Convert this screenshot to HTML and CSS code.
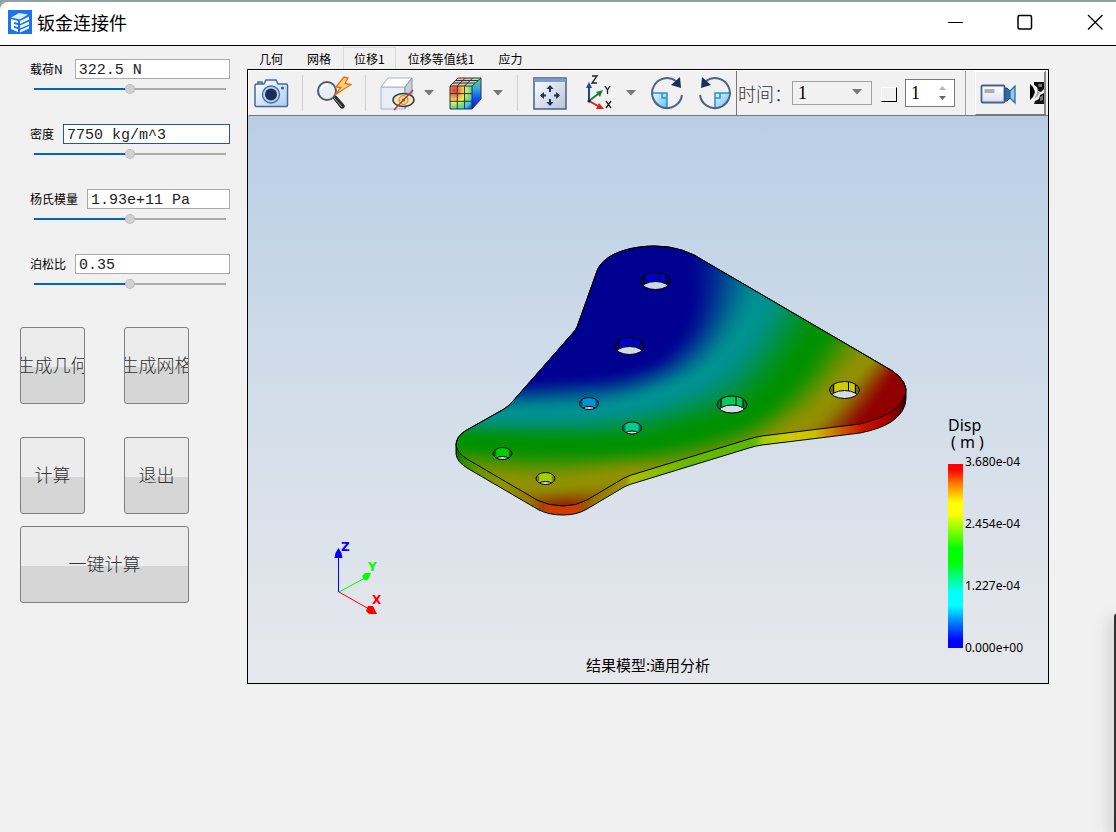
FILE: index.html
```html
<!DOCTYPE html>
<html lang="zh-CN">
<head>
<meta charset="utf-8">
<title>钣金连接件</title>
<link rel="stylesheet" href="styles.css">
</head>
<body>
<div class="window">
  <header class="titlebar">
    <svg class="logo" viewBox="0 0 24 24" aria-hidden="true">
      <rect width="24" height="24" fill="#1b74e8"/>
      <path d="M3 7.500 11 3l9 1.500-8 5z" fill="#dfeafa"/>
      <path d="M3 9l7 2v2l-4-1v2l4 1v2l-4-1v2l4 1v3l-7-3z" fill="#fff"/>
      <path d="M12 11l9-4.500v3L12 14zM12 15.500l9-4v3l-9 4zM12 20l9-4v2.500L12 22.500z" fill="#f1f6fd"/>
    </svg>
    <h1 class="title">钣金连接件</h1>
    <div class="winctl">
      <button class="wbtn" type="button" aria-label="最小化"><svg viewBox="0 0 16 16"><path d="M1 8.500H16" stroke="#000"/></svg></button>
      <button class="wbtn" type="button" aria-label="最大化"><svg viewBox="0 0 16 16"><rect x="1" y="1.500" width="13.500" height="13.500" rx="1.500" fill="none" stroke="#000" stroke-width="1.500"/></svg></button>
      <button class="wbtn" type="button" aria-label="关闭"><svg viewBox="0 0 16 16"><path d="M1 1 15.500 15.500M15.500 1 1 15.500" stroke="#000" stroke-width="1.300"/></svg></button>
    </div>
  </header>

  <main class="main">
    <aside class="side">
      <div class="param">
        <div class="prow prow-unit"><label for="load">载荷N</label><input id="load" class="ptext" type="text" value="322.5 N"></div>
        <input class="slider" type="range" value="50" aria-label="载荷N">
      </div>
      <div class="param">
        <div class="prow"><label for="dens">密度</label><input id="dens" class="ptext ptext-active" type="text" value="7750 kg/m^3"></div>
        <input class="slider" type="range" value="50" aria-label="密度">
      </div>
      <div class="param">
        <div class="prow"><label for="young">杨氏模量</label><input id="young" class="ptext" type="text" value="1.93e+11 Pa"></div>
        <input class="slider" type="range" value="50" aria-label="杨氏模量">
      </div>
      <div class="param">
        <div class="prow"><label for="poisson">泊松比</label><input id="poisson" class="ptext" type="text" value="0.35"></div>
        <input class="slider" type="range" value="50" aria-label="泊松比">
      </div>
      <div class="actions">
        <div class="arow">
          <button class="act" type="button"><span>生成几何</span></button>
          <button class="act" type="button"><span>生成网格</span></button>
        </div>
        <div class="arow arow-low">
          <button class="act" type="button"><span>计算</span></button>
          <button class="act" type="button"><span>退出</span></button>
        </div>
        <button class="act act-wide" type="button"><span>一键计算</span></button>
      </div>
    </aside>

    <section class="viewer">
      <nav class="tabs" role="tablist">
        <button class="tab" role="tab" type="button">几何</button>
        <button class="tab" role="tab" type="button">网格</button>
        <button class="tab tab-on" role="tab" type="button" aria-selected="true">位移1</button>
        <button class="tab" role="tab" type="button">位移等值线1</button>
        <button class="tab" role="tab" type="button">应力</button>
      </nav>
      <div class="frame">
        <div class="toolbar">
          <div class="group group-first">
            <button class="tool" type="button" aria-label="截图"><svg viewBox="0 0 36 36">
              <defs><linearGradient id="cam" x1="0" y1="0" x2="1" y2="1"><stop offset="0" stop-color="#fff"/><stop offset="1" stop-color="#a9cdf0"/></linearGradient></defs>
              <path d="M2 10.500q0-1.500 1.500-1.500H11l2-4h10L25 9h8q1.500 0 1.500 1.500V30q0 1.500-1.500 1.500H3.500Q2 31.500 2 30zM5 9V7h4v2" fill="url(#cam)" stroke="#48689a" stroke-width="1.500"/>
              <circle cx="18" cy="19.500" r="8.500" fill="#b9d2ee" stroke="#48689a" stroke-width="1.300"/><circle cx="18" cy="19.500" r="6" fill="#1c2d57"/><circle cx="29.500" cy="13" r="1.500" fill="#34588f"/></svg></button>
          </div>
          <div class="group">
            <button class="tool" type="button" aria-label="快速缩放"><svg viewBox="0 0 36 36">
              <path d="m17 23 3-2 8 9q1 4-3 3z" fill="#333" stroke="#222"/><path d="m18 23 8 9" stroke="#999"/>
              <circle cx="11" cy="16" r="9" fill="#e9eef3" stroke="#555c66" stroke-width="2"/><path d="M5 15q1-5 7-5" stroke="#fff" stroke-width="2" fill="none"/>
              <path d="m28 2-8 10 5 .5L19 20 35 9.500l-6-1L32 3z" fill="#ffd27b" stroke="#e07412" stroke-width="1.300"/></svg></button>
          </div>
          <div class="group">
            <div class="split">
              <button class="tool" type="button" aria-label="显示隐藏"><svg viewBox="0 0 36 36">
                <path d="M2 12h24v22H2z" fill="#e9eef5" stroke="#a9b3c3"/><path d="M2 12 9 3h24l-7 9z" fill="#fff" stroke="#a9b3c3"/><path d="M26 12l7-9v20l-7 11z" fill="#c5cfdd" stroke="#8292ab"/>
                <ellipse cx="24.500" cy="25" rx="10.500" ry="6.500" fill="#f8e3a2" stroke="#333c57" stroke-width="1.500"/><circle cx="24.500" cy="25" r="4.500" fill="#f3d68c" stroke="#a38a55"/><circle cx="24.500" cy="25" r="1.500" fill="#555"/>
                <path d="M34 15 15 35" stroke="#bd3d28" stroke-width="1.500"/></svg></button>
              <button class="drop" type="button" aria-label="更多"><svg viewBox="0 0 11 6"><path d="M0 0h10L5 5.500z" fill="#777"/></svg></button>
            </div>
            <div class="split">
              <button class="tool" type="button" aria-label="云图"><svg viewBox="0 0 36 36">
                <defs><radialGradient id="cube" cx=".2" cy=".2" r="1"><stop offset="0" stop-color="#e4372a"/><stop offset=".25" stop-color="#f58a3c"/><stop offset=".5" stop-color="#f3ef58"/><stop offset=".72" stop-color="#70dd78"/><stop offset=".88" stop-color="#3fc5ee"/><stop offset="1" stop-color="#2367ee"/></radialGradient>
                <linearGradient id="cubeside" x1="0" y1="0" x2="0" y2="1"><stop offset="0" stop-color="#78d06c"/><stop offset=".35" stop-color="#30a9e0"/><stop offset=".65" stop-color="#164ff0"/><stop offset="1" stop-color="#091fb5"/></linearGradient></defs>
                <path d="M2 11h22v23H2z" fill="url(#cube)"/><path d="M2 11 10 3h23l-9 8z" fill="#f0c49a"/><path d="m17 11 8-8h8l-9 8z" fill="#b9e6a2"/><path d="m24 11 9-8v21l-9 10z" fill="url(#cubeside)"/>
                <path d="M2 11h22v23H2zM2 11 10 3h23l-9 8M33 3v21l-9 10M9.300 11v23M16.600 11v23M2 18.600h22M2 26.300h22M9.300 11l8-8M16.600 11l8-8M5 8h22M8 5.500h22" fill="none" stroke="#263351"/></svg></button>
              <button class="drop" type="button" aria-label="更多"><svg viewBox="0 0 11 6"><path d="M0 0h10L5 5.500z" fill="#777"/></svg></button>
            </div>
          </div>
          <div class="group group-last">
            <button class="tool" type="button" aria-label="适合窗口"><svg viewBox="0 0 36 36">
              <defs><linearGradient id="fit" x1="0" y1="0" x2="1" y2="1"><stop offset="0" stop-color="#fff"/><stop offset="1" stop-color="#b8c4d6"/></linearGradient></defs>
              <rect x="2" y="3" width="32" height="31" fill="url(#fit)" stroke="#465f88" stroke-width="1.500"/><path d="M2.500 3.500h31V7h-31z" fill="#7d9cc8"/>
              <path d="M18 17v-5M18 24v5M14 20.500H9M22 20.500h5" stroke="#1d3263" stroke-width="2"/><path d="m14.500 14 3.500-4 3.500 4zM14.500 27l3.500 4 3.500-4zM12 17l-4 3.500 4 3.500zM24 17l4 3.500-4 3.500z" fill="#1d3263"/></svg></button>
            <div class="split">
              <button class="tool" type="button" aria-label="视图方向"><svg viewBox="0 0 36 36">
                <path d="M8 26V9" stroke="#20469c" stroke-width="2"/><path d="M8 7l3 6H5z" fill="#20469c"/>
                <path d="m8 26 9-7" stroke="#178139" stroke-width="2"/><path d="m22 15-3 7-4-5z" fill="#178139"/>
                <path d="m8 26 9 5" stroke="#e31b1b" stroke-width="2"/><path d="m23 34-8 0 3-6z" fill="#e31b1b"/><circle cx="8" cy="26" r="1.500" fill="#222"/>
                <path d="M11 1h5l-5 7h5M24 11l2.500 4 2.500-4M26.500 15v4M25 26l5 7M30 26l-5 7" stroke="#222" stroke-width="1.300" fill="none"/></svg></button>
              <button class="drop" type="button" aria-label="更多"><svg viewBox="0 0 11 6"><path d="M0 0h10L5 5.500z" fill="#777"/></svg></button>
            </div>
            <button class="tool" type="button" aria-label="顺时针旋转"><svg viewBox="0 0 36 36">
              <defs><linearGradient id="rot" x1="0" y1="0" x2="1" y2="1"><stop offset="0" stop-color="#e8f7ff"/><stop offset="1" stop-color="#5dc1ee"/></linearGradient></defs>
              <path d="M3 18h14v15A15 15 0 0 1 3 18z" fill="url(#rot)"/><path d="M2 18h15v15M12 18v5h5" stroke="#2b8fca" stroke-width="1.500" fill="none"/>
              <path d="M32 20A15 15 0 1 1 26 6" stroke="#4c6389" stroke-width="2" fill="none"/><path d="m30 2 1 11-10-3z" fill="#1b2f5b"/></svg></button>
            <button class="tool" type="button" aria-label="逆时针旋转"><svg viewBox="0 0 36 36">
              <path d="M16 33V18h14q-1 13-14 15z" fill="url(#rot)"/><path d="M31 18H16v15M21 18v5h-5" stroke="#2b8fca" stroke-width="1.500" fill="none"/>
              <path d="M1 20A15 15 0 1 0 7 6" stroke="#4c6389" stroke-width="2" fill="none"/><path d="m3 2-1 11 10-3z" fill="#1b2f5b"/></svg></button>
          </div>
          <div class="group group-time">
            <label class="tlabel" for="time">时间：</label>
            <div class="combo">
              <select id="time"><option>1</option></select>
              <svg viewBox="0 0 11 6"><path d="M0 0h10L5 5.500z" fill="#777"/></svg>
            </div>
            <input class="check" type="checkbox" aria-label="循环">
            <div class="spin">
              <input type="number" value="1" aria-label="步数">
              <div class="steps">
                <button type="button" aria-label="增加"><svg viewBox="0 0 7 4"><path d="M0 4h7L3.500 0z" fill="#b5b5b5"/></svg></button>
                <button type="button" aria-label="减少"><svg viewBox="0 0 7 4"><path d="M0 0h7L3.500 4z" fill="#666"/></svg></button>
              </div>
            </div>
          </div>
          <div class="group group-rec">
            <div class="recpanel">
              <button class="tool" type="button" aria-label="录制"><svg viewBox="0 0 36 36">
                <defs><linearGradient id="vid" x1="0" y1="0" x2="0" y2="1"><stop offset="0" stop-color="#fff"/><stop offset="1" stop-color="#d8e0ef"/></linearGradient></defs>
                <rect x="1.500" y="10.500" width="23" height="17" rx="1" fill="url(#vid)" stroke="#48618d" stroke-width="1.800"/><rect x="4.500" y="14" width="10" height="4" fill="#a8afba"/>
                <path d="M25 13h2l3 3v7l-3 3h-2z" fill="#326ba3" stroke="#214d80"/><path d="m30 16 5-5v17l-5-5z" fill="#8acbf3" stroke="#326ba3" stroke-width="1.300"/></svg></button>
              <button class="tool tool-more" type="button" aria-label="更多工具"><svg viewBox="0 0 14 22">
                <rect width="14" height="22" fill="#f4f4f4"/><path d="M0 2l3 3 2 5-2 5-3 3z" fill="#000"/><path d="M4 0h10v7l-3 3-3-1-1-4-3-2z" fill="#111"/><path d="M14 11v11H4l1-3 4-2 1-4z" fill="#111"/><path d="M7 8l3 3-3 4-3 2 3-6z" fill="#aaa"/><path d="m8 2 4 0 0 3-3 0zM10 15l3-2v5l-3 1z" fill="#777"/></svg></button>
            </div>
          </div>
        </div>

        <div class="scene">
          <canvas class="plate" id="plate" width="470" height="285"></canvas>
          <svg class="triad" viewBox="0 0 60 80" aria-hidden="true">
            <path d="M8.500 52V12" stroke="#00f"/><path d="M8.500 8l3 5 1 5h-8l1-5z" fill="#00f"/>
            <path d="m9 52 26-14" stroke="#0f0"/><path d="m41 33-3 7-4 0-2-4 3-3z" fill="#0f0"/>
            <path d="m9 52 30 17" stroke="red"/><path d="m47 74-4-8-5 0-2 5 3 3z" fill="red"/>
            <text x="11" y="11" fill="#00f">Z</text><text x="38" y="31" fill="#0f0">Y</text><text x="42" y="64" fill="red">X</text>
          </svg>
          <div class="legend">
            <div class="lhead">Disp</div>
            <div class="lunit">( m )</div>
            <div class="lbody">
              <div class="lbar"></div>
              <div class="lnums"><span>3.680e-04</span><span>2.454e-04</span><span>1.227e-04</span><span>0.000e+00</span></div>
            </div>
          </div>
          <p class="caption">结果模型:通用分析</p>
        </div>
      </div>
    </section>
  </main>
  <div class="edge"></div>
</div>
<script src="plate.js"></script>
</body>
</html>
```
FILE: styles.css
```css
* { box-sizing: border-box; }
body {
  margin: 0;
  background: #91a3a1;
  font-family: "Noto Sans", "Noto Sans CJK SC", sans-serif;
  font-size: 12px;
  color: #000;
}
button { border: 0; padding: 0; background: none; font: inherit; color: inherit; }
svg { display: block; }
.window {
  display: flex;
  flex-direction: column;
  min-height: 100vh;
  border-top: 2px solid #91a3a1;
  overflow: hidden;
  position: relative;
}
.titlebar {
  display: flex;
  align-items: center;
  height: 44px;
  padding: 0 13px 4px 8px;
  background: #fff;
  border-bottom: 1px solid #000;
  border-top-left-radius: 8px;
}
.logo { width: 24px; height: 24px; }
.title {
  margin: 0 0 0 5px;
  font-size: 18px;
  line-height: 24px;
  font-weight: 400;
  font-family: "Noto Sans CJK SC", sans-serif;
}
.winctl { display: flex; gap: 54px; margin-left: auto; }
.wbtn, .wbtn svg { width: 16px; height: 16px; }
.wbtn svg { fill: none; }

.main {
  flex: 1;
  display: flex;
  padding: 0 67px 148px 0;
  background: #f1f1f1;
}
.side { flex: none; width: 247px; padding: 13px 17px 0 20px; }
.param { height: 65px; padding-left: 10px; }
.prow { display: flex; align-items: center; gap: 9px; height: 20px; }
.prow-unit { gap: 12px; }
.prow label { white-space: nowrap; font-family: "Noto Sans CJK SC", sans-serif; line-height: 20px; }
.ptext {
  flex: 1;
  min-width: 0;
  height: 20px;
  padding: 3px 3px 0;
  border: 1px solid #ababab;
  background: #fff;
  color: #222;
  font: 15px/15px "Liberation Mono", monospace;
  outline: none;
}
.ptext-active { border-color: #2c53a0; }
.slider {
  display: block;
  appearance: none;
  width: calc(100% - 8px);
  height: 10px;
  margin: 5px 4px 0;
  background: linear-gradient(90deg, #0067c0 50%, #ababab 50%) center / 100% 2px no-repeat;
}
.slider::-webkit-slider-thumb {
  appearance: none;
  width: 10px;
  height: 10px;
  border-radius: 50%;
  border: 1px dotted #aaa;
  background: #d0d0d0;
}
.actions { width: 169px; padding-top: 8px; }
.arow { display: flex; justify-content: space-between; margin-bottom: 33px; }
.arow-low { margin-bottom: 12px; }
.act {
  display: flex;
  justify-content: center;
  align-items: center;
  width: 65px;
  height: 77px;
  padding-bottom: 3px;
  overflow: hidden;
  border: 1px solid #808080;
  border-radius: 3px;
  background: linear-gradient(#ececec 52%, #d6d6d6 52%);
  font: 300 18px/24px "Noto Sans CJK SC", sans-serif;
  color: #333;
}
.act span { flex: none; white-space: nowrap; }
.act-wide { width: 100%; }

.viewer { flex: 1; min-width: 0; display: flex; flex-direction: column; }
.tabs { display: flex; height: 23px; padding-top: 1px; }
.tab {
  padding: 0 12px;
  border-top: 1px solid transparent;
  font-family: "Noto Sans CJK SC", sans-serif;
  white-space: nowrap;
  line-height: 21px;
}
.tab-on { padding: 0 10px; border: 1px solid #d9d9d9; border-bottom: 0; }
.frame { flex: 1; display: flex; flex-direction: column; border: 1px solid #000; }
.toolbar {
  display: flex;
  align-items: center;
  height: 46px;
  overflow: hidden;
  border-top: 1px solid #fff;
  border-left: 1px solid #fff;
  border-bottom: 1px solid #777;
}
.group {
  flex: none;
  display: flex;
  align-items: center;
  gap: 13px;
  height: 36px;
  padding: 0 13px;
  border-left: 1px solid #d0d0d0;
}
.group-first { padding-left: 4px; border-left: 0; }
.group-last { padding: 0 1px 0 14px; }
.group-time { height: 100%; gap: 0; padding: 0 10px 0 1px; border-color: #777; }
.group-rec { flex: 1; height: 100%; padding: 0 2px 0 9px; border-color: #a0a0a0; }
.tool { flex: none; width: 36px; height: 36px; }
.tool svg { width: 100%; height: 100%; }
.split { display: flex; align-items: center; gap: 9px; }
.drop, .drop svg { width: 11px; height: 6px; }
.tlabel { width: 54px; font: 300 18px/24px "Noto Sans CJK SC", sans-serif; color: #333; white-space: nowrap; }
.combo { position: relative; width: 80px; height: 24px; }
.combo select {
  appearance: none;
  width: 100%;
  height: 100%;
  padding: 0 5px;
  border: 1px solid #a0a0a0;
  border-radius: 0;
  background: #f1f1f1;
  color: #000;
  font: 18px/22px "Liberation Serif", serif;
}
.combo svg { position: absolute; right: 9px; top: 8px; width: 11px; height: 6px; pointer-events: none; }
.check {
  appearance: none;
  width: 16px;
  height: 15px;
  margin: 2px 8px 0 9px;
  border: 1px solid #fff;
  border-right-color: #000;
  border-bottom-color: #000;
  background: #f1f1f1;
}
.spin { display: flex; width: 50px; height: 28px; border: 1px solid #7a7a7a; background: #fff; }
.spin input {
  flex: 1;
  min-width: 0;
  padding: 0 0 0 5px;
  border: 0;
  background: none;
  font: 18px/26px "Liberation Serif", serif;
  appearance: textfield;
}
.spin input::-webkit-inner-spin-button { appearance: none; margin: 0; }
.steps { display: flex; flex-direction: column; justify-content: center; gap: 6px; padding-right: 8px; }
.steps button, .steps svg { width: 7px; height: 4px; }
.recpanel {
  flex: 1;
  display: flex;
  align-items: center;
  gap: 14px;
  height: 100%;
  padding-left: 4px;
  overflow: hidden;
  border: 1px solid #fff;
  border-right: 2px solid #888;
  border-bottom-color: #777;
}
.tool-more { width: 14px; height: 22px; }

.scene {
  flex: 1;
  min-height: 420px;
  position: relative;
  background: linear-gradient(#b9cee6, #d2dde9 50%, #e7e8ec);
}
.plate { position: absolute; left: 202px; top: 124px; }
.triad {
  position: absolute;
  left: 82px;
  bottom: 63px;
  width: 60px;
  height: 80px;
  fill: none;
  font: bold 12px "DejaVu Sans", sans-serif;
}
.legend { position: absolute; right: 20px; bottom: 25px; width: 80px; }
.lhead { font-size: 16px; line-height: 18px; }
.lunit { margin-bottom: 4px; padding-left: 3px; font-size: 16px; line-height: 16px; }
.lbody { display: flex; align-items: center; gap: 2px; }
.lbar {
  width: 15px;
  height: 184px;
  background: linear-gradient(#f00 3%, #ff8000 11%, #ff0 21%, #ff0 27%, #0f0 46%, #0f0 53%, #0ff 70%, #0ff 77%, #0080ff 86%, #00f 96%);
}
.lnums { display: flex; flex-direction: column; justify-content: space-between; height: 204px; line-height: 16px; padding-bottom: 2px; }
.caption {
  position: absolute;
  left: 0;
  right: 0;
  bottom: 8px;
  margin: 0;
  text-align: center;
  font: 15px/20px "Noto Sans CJK SC", sans-serif;
}
.edge {
  position: absolute;
  right: 0;
  bottom: 0;
  width: 2px;
  height: 218px;
  border-top-left-radius: 2px;
  background: #333;
  box-shadow: 0 4px 16px rgba(0, 0, 0, .8);
}
```
FILE: plate.js
```js
const canvas = document.getElementById('plate');
const W = canvas.width, H = canvas.height, OX = 450, OY = 240;
const ctx = canvas.getContext('2d');

// Outline of the top face and the silhouette of the whole plate.
const left = 'M655 246C630 246 603 254 597 271L577 327Q575 331 571 335L513 401Q509 406 504 409L465 431Q456 437 456 445';
const right = 'L706 262Q683 246 655 246Z';
const top_ = new Path2D(left + 'Q457 453 467 459L537 500Q549 506 563 506Q576 506 587 500L624 478Q630 475 638 473L749 439Q755 437 762 436L860 424Q880 419 891 412Q906 402 906 389Q904 376 884 366' + right);
const body = new Path2D(left + 'L456 454Q457 462 467 468L539 510Q549 515 563 515Q577 515 587 509L624 487Q630 484 638 482L749 448Q755 446 762 445L860 433Q880 429 891 422Q906 412 906 398L906 389Q904 376 884 366' + right);

// Displacement isolines, from the fixed end to the free corners.
const isolines = [
  [[[430,376],[520,376],[560,373],[610,369],[650,357],[669,340],[681,320],[685,295],[682,270],[675,230]]],
  [[[430,414],[520,413],[560,412],[600,409],[640,401],[690,382],[720,360],[742,332],[758,304],[778,260]]],
  [[[430,440],[500,443],[560,445],[610,445],[650,442],[690,433],[735,420],[764,402],[790,375],[812,344],[845,290]]],
  [[[430,470],[495,481],[547,484],[590,480],[627,475],[690,471],[750,452],[797,427],[825,405],[853,374],[880,345],[920,300]]],
  [[[530,540],[545,522],[563,515],[582,522],[596,540]], [[845,450],[867,419],[880,402],[897,376],[930,340]]]
];
const colors = [[0,0,145],[0,145,145],[0,145,0],[145,145,0],[145,0,0]];

function smooth(p) {
  const out = [];
  for (let i = 0; i < p.length - 1; i++) {
    const a = p[i - 1] || p[i], b = p[i], c = p[i + 1], d = p[i + 2] || c;
    for (let s = 0; s < 5; s++) {
      const t = s / 5;
      out.push([0, 1].map(k => 0.5 * (2 * b[k] + (c[k] - a[k]) * t + (2 * a[k] - 5 * b[k] + 4 * c[k] - d[k]) * t * t + (3 * b[k] - a[k] - 3 * c[k] + d[k]) * t * t * t)));
    }
  }
  out.push(p[p.length - 1]);
  return out;
}
const curves = isolines.map(set => set.map(smooth));
const regions = curves.map(set => set.map(line =>
  line.concat([[1500, line[line.length - 1][1]], [1500, 1000], [line[0][0], 1000]])));

function inside(poly, x, y) {
  let hit = false;
  for (let i = 0, j = poly.length - 1; i < poly.length; j = i++) {
    const [xi, yi] = poly[i], [xj, yj] = poly[j];
    if ((yi > y) !== (yj > y) && x < (xj - xi) * (y - yi) / (yj - yi) + xi) hit = !hit;
  }
  return hit;
}
function dist(set, x, y) {
  let best = 1e9;
  for (const line of set) for (let i = 1; i < line.length; i++) {
    const [ax, ay] = line[i - 1], dx = line[i][0] - ax, dy = line[i][1] - ay;
    const t = Math.max(0, Math.min(1, ((x - ax) * dx + (y - ay) * dy) / (dx * dx + dy * dy)));
    best = Math.min(best, (x - ax - t * dx) ** 2 + (y - ay - t * dy) ** 2);
  }
  return Math.sqrt(best);
}

const field = document.createElement('canvas');
field.width = W; field.height = H;
const fctx = field.getContext('2d');
const img = fctx.createImageData(W, H);
for (let py = 0; py < H; py++) for (let px = 0; px < W; px++) {
  const x = px + OX, y = py + OY;
  let k = -1;
  while (k < 4 && regions[k + 1].some(r => inside(r, x, y))) k++;
  let c;
  if (k < 0) c = colors[0];
  else if (k > 3) c = colors[4];
  else {
    const a = dist(curves[k], x, y), b = dist(curves[k + 1], x, y), t = a / (a + b || 1);
    const s = t * t * (3 - 2 * t);
    c = colors[k].map((v, i) => v + (colors[k + 1][i] - v) * s);
  }
  const o = (py * W + px) * 4;
  img.data[o] = c[0]; img.data[o + 1] = c[1]; img.data[o + 2] = c[2]; img.data[o + 3] = 255;
}
fctx.putImageData(img, 0, 0);

ctx.translate(-OX, -OY);
const side = ctx.createLinearGradient(456, 0, 906, 0);
[[456,'#0a6400'],[462,'#1e8c00'],[475,'#5a9600'],[500,'#8c9600'],[530,'#967800'],[542,'#a04600'],[550,'#cd3c00'],[574,'#d23c00'],[584,'#a05000'],[596,'#967800'],[626,'#969600'],[631,'#aabe00'],[690,'#64b900'],[754,'#5ab900'],[764,'#a5cd00'],[790,'#cdcd00'],[815,'#cdbe00'],[840,'#cd6400'],[862,'#cd1400'],[884,'#b40000'],[896,'#820000'],[906,'#3c0000']]
  .forEach(([x, c]) => side.addColorStop((x - 456) / 450, c));
ctx.fillStyle = side;
ctx.fill(body);
ctx.save();
ctx.clip(top_);
ctx.drawImage(field, OX, OY);
ctx.restore();
ctx.strokeStyle = '#000';
ctx.lineWidth = 1;
ctx.stroke(top_);
ctx.stroke(body);

// Bolt holes: centre, radii, wall colour.
[[655.5,281,15,8.5,'#0000cd','#000078'],[629.5,346,15,8.5,'#0000cd','#000078'],[732,404.5,15,8.5,'#00cd5a','#007846'],[844.5,390,15,8.5,'#cdcd00','#6e6e00'],
 [589,403.5,9.5,6,'#0091d2','#005a8c'],[632,428,9.5,6,'#00cd8c','#00785a'],[502.5,453.5,9.5,6,'#00cd00','#006e00'],[545.5,478.5,9.5,6,'#aacd00','#6e7800']]
.forEach(([x, y, rx, ry, c, d]) => {
  const rim = new Path2D(), floor = new Path2D();
  rim.ellipse(x, y, rx, ry, 0, 0, Math.PI * 2);
  floor.ellipse(x, y + 9, rx, ry, 0, 0, Math.PI * 2);
  const wall = ctx.createLinearGradient(x - rx, 0, x + rx, 0);
  wall.addColorStop(0, d); wall.addColorStop(0.12, d); wall.addColorStop(0.2, c);
  wall.addColorStop(0.8, c); wall.addColorStop(0.9, d); wall.addColorStop(1, d);
  ctx.fillStyle = wall;
  ctx.fill(rim);
  ctx.save();
  ctx.clip(rim);
  if (rx > 12) {
    ctx.beginPath();
    [-11, 4, 11].forEach(o => { ctx.moveTo(x + o, y - ry); ctx.lineTo(x + o, y + 3); });
    ctx.stroke();
  }
  ctx.globalCompositeOperation = 'destination-out';
  ctx.fill(floor);
  ctx.globalCompositeOperation = 'source-over';
  ctx.stroke(floor);
  ctx.restore();
  ctx.stroke(rim);
});
```
